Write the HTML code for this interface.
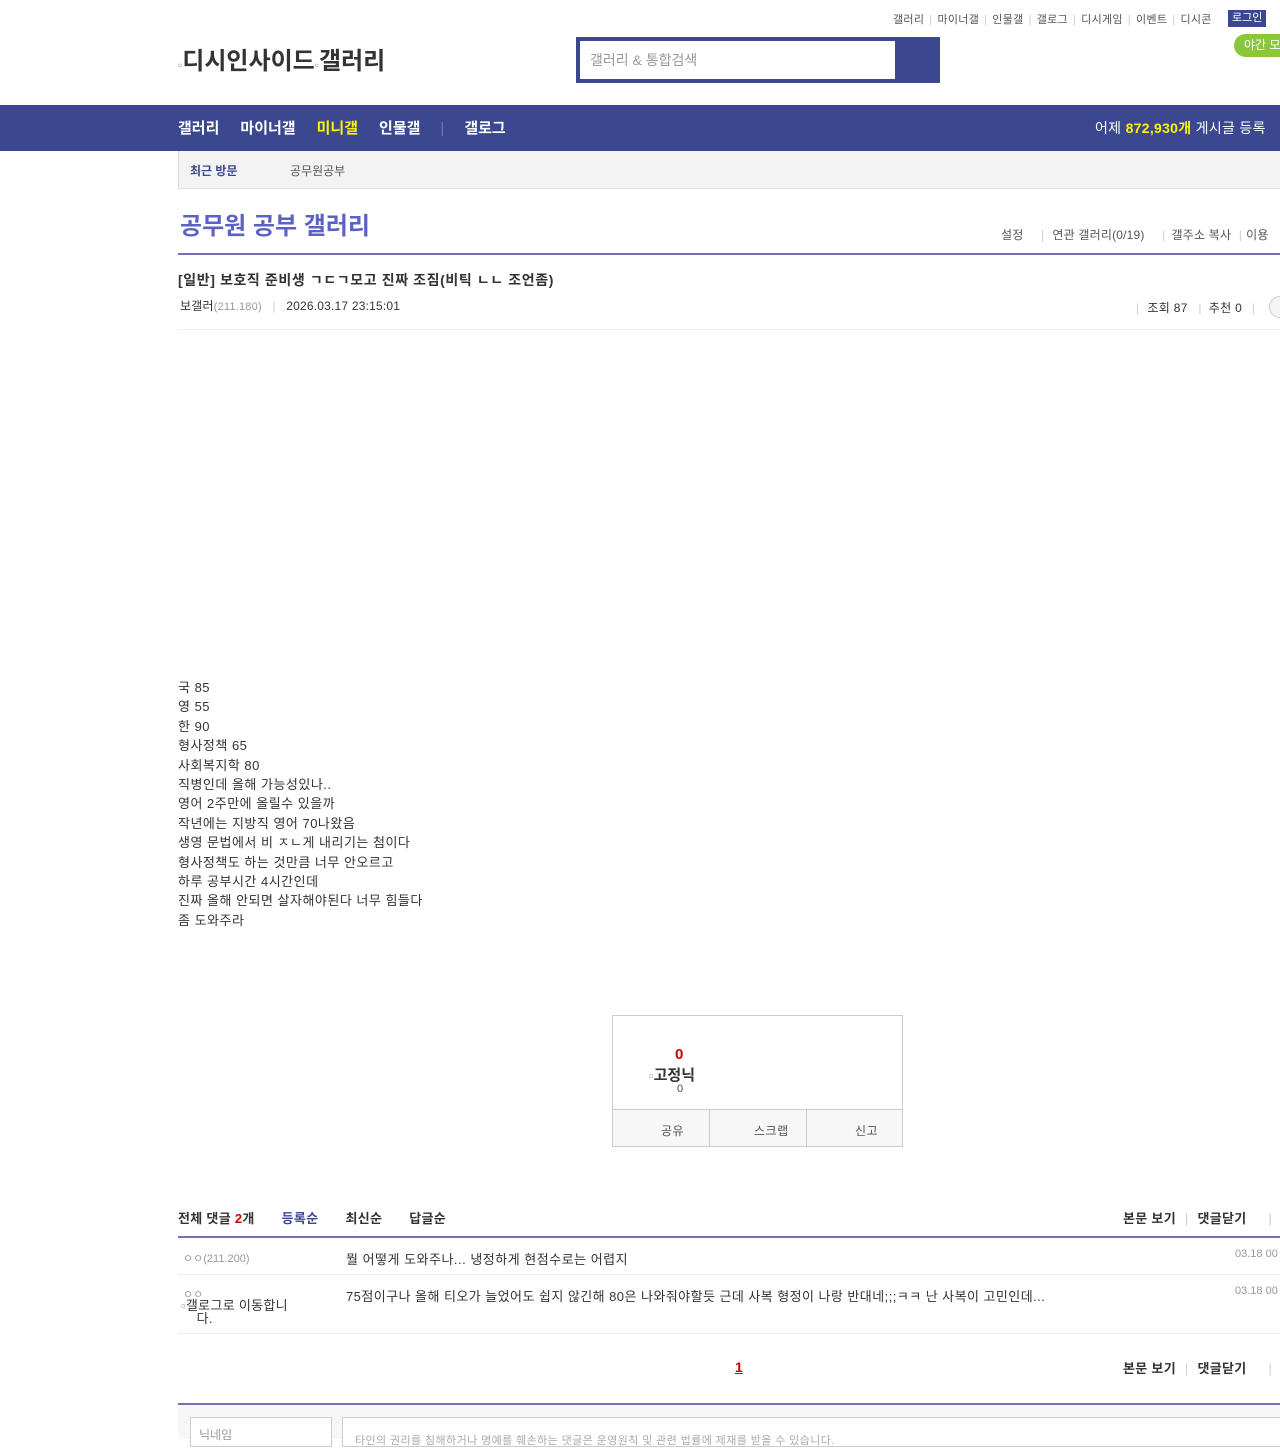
<!DOCTYPE html>
<html><head><meta charset="utf-8"><style>
*{margin:0;padding:0;box-sizing:border-box}
body{width:1280px;height:1439px;overflow:hidden;background:#fff;font-family:"Liberation Sans","Noto Sans CJK KR",sans-serif;color:#333;position:relative}
.a{position:absolute;white-space:nowrap}
.gnb{font-size:11px;color:#555;letter-spacing:0.3px}
.gnb span.s{color:#ccc;margin:0 5px}
</style></head><body>
<div class="a gnb" style="left:893px;top:11px">갤러리<span class="s">|</span>마이너갤<span class="s">|</span>인물갤<span class="s">|</span>갤로그<span class="s">|</span>디시게임<span class="s">|</span>이벤트<span class="s">|</span>디시콘</div>
<div class="a" style="left:1228px;top:10px;background:#3b4890;color:#fff;font-size:11px;padding:1px 4px;height:17px;line-height:15px">로그인</div>
<div class="a" style="left:1234px;top:34px;background:#8ac73c;color:#fff;font-size:12px;padding:0 10px;height:23px;line-height:23px;border-radius:12px 0 0 12px;width:60px">야간 모</div>
<div class="a" style="left:178px;top:41px;font-size:24px;font-weight:bold;color:#333"><span style="font-size:12px;color:#999">▫</span>디시인사이드<span style="font-size:12px;color:#999">▫</span>갤러리</div>
<div class="a" style="left:576px;top:37px;width:364px;height:46px;background:#3b4890"></div>
<div class="a" style="left:580px;top:41px;width:315px;height:38px;background:#fff;font-size:14px;color:#999;line-height:38px;padding-left:10px">갤러리 &amp; 통합검색</div>
<div class="a" style="left:0;top:105px;width:1280px;height:46px;background:#3b4890"></div>
<div class="a" style="left:178px;top:106px;height:46px;line-height:46px;font-size:15px;font-weight:bold;color:#fff;word-spacing:0">갤러리<span style="margin-left:21px">마이너갤</span><span style="margin-left:21px;color:#fff200">미니갤</span><span style="margin-left:21px">인물갤</span><span style="margin-left:20px;color:#6a75b0;font-weight:normal">|</span><span style="margin-left:20px">갤로그</span></div>
<div class="a" style="left:1095px;top:105px;height:46px;line-height:46px;font-size:14px;color:#fff;letter-spacing:0.3px">어제 <b style="color:#fff200">872,930개</b> 게시글 등록</div>
<div class="a" style="left:178px;top:151px;width:1102px;height:38px;background:#f3f3f3;border:1px solid #ddd;border-top:0;border-right:0"></div>
<div class="a" style="left:190px;top:162px;font-size:12px;font-weight:bold;color:#3b4890">최근 방문</div>
<div class="a" style="left:290px;top:162px;font-size:12px;color:#555">공무원공부</div>
<div class="a" style="left:180px;top:206px;font-size:24px;font-weight:bold;color:#5c62c4">공무원 공부 갤러리</div>
<div class="a" style="left:1001px;top:226px;font-size:12px;color:#555;letter-spacing:0.2px">설정 <span style="color:#ccc;margin:0 8px 0 14px">|</span>연관 갤러리(0/19) <span style="color:#ccc;margin:0 6px 0 14px">|</span>갤주소 복사 <span style="color:#ccc;margin:0 4px">|</span>이용</div>
<div class="a" style="left:178px;top:253px;width:1102px;height:2px;background:#7370b8"></div>
<div class="a" style="left:178px;top:270px;font-size:14px;font-weight:bold;color:#333;letter-spacing:0.6px">[일반] 보호직 준비생 ㄱㄷㄱ모고 진짜 조짐(비틱 ㄴㄴ 조언좀)</div>
<div class="a" style="left:180px;top:297px;font-size:12px;color:#333;letter-spacing:0.2px">보갤러<span style="color:#999;font-size:11px">(211.180)</span> <span style="color:#ccc;margin:0 7px">|</span> 2026.03.17 23:15:01</div>
<div class="a" style="left:1136px;top:299px;font-size:12px;color:#333;letter-spacing:0.3px"><span style="color:#ccc;margin-right:8px">|</span>조회 87 <span style="color:#ccc;margin:0 7px">|</span>추천 0 <span style="color:#ccc;margin:0 6px">|</span></div>
<div class="a" style="left:1269px;top:296px;width:24px;height:22px;border:1px solid #ccc;border-radius:11px;background:#f5f5f5"></div>
<div class="a" style="left:178px;top:329px;width:1102px;height:1px;background:#eee"></div>
<div class="a" style="left:178px;top:678px;font-size:13px;color:#333;line-height:19.4px;white-space:normal;letter-spacing:0.5px">국 85<br>영 55<br>한 90<br>형사정책 65<br>사회복지학 80<br>직병인데 올해 가능성있나..<br>영어 2주만에 올릴수 있을까<br>작년에는 지방직 영어 70나왔음<br>생영 문법에서 비 ㅈㄴ게 내리기는 첨이다<br>형사정책도 하는 것만큼 너무 안오르고<br>하루 공부시간 4시간인데<br>진짜 올해 안되면 살자해야된다 너무 힘들다<br>좀 도와주라</div>
<div class="a" style="left:612px;top:1015px;width:291px;height:132px;border:1px solid #ccc"></div>
<div class="a" style="left:675px;top:1046px;font-size:15px;font-weight:bold;color:#c00">0</div>
<div class="a" style="left:649px;top:1064px;font-size:15px;font-weight:bold;color:#333"><span style="font-size:13px;color:#999">▫</span>고정닉</div>
<div class="a" style="left:677px;top:1083px;font-size:11px;color:#3b4890">0</div>
<div class="a" style="left:613px;top:1109px;width:289px;height:37px;background:#f7f7f7;border-top:1px solid #ccc"></div>
<div class="a" style="left:709px;top:1110px;width:1px;height:36px;background:#ccc"></div>
<div class="a" style="left:806px;top:1110px;width:1px;height:36px;background:#ccc"></div>
<div class="a" style="left:661px;top:1122px;font-size:12px;color:#555;letter-spacing:0.5px">공유</div>
<div class="a" style="left:754px;top:1122px;font-size:12px;color:#555;letter-spacing:0.5px">스크랩</div>
<div class="a" style="left:855px;top:1122px;font-size:12px;color:#555;letter-spacing:0.5px">신고</div>
<div class="a" style="left:178px;top:1208px;font-size:13px;font-weight:bold;color:#333;letter-spacing:0.3px">전체 댓글 <span style="color:#c00">2</span>개<span style="color:#3b4890;margin-left:27px">등록순</span><span style="margin-left:27px">최신순</span><span style="margin-left:27px">답글순</span></div>
<div class="a" style="left:1123px;top:1208px;font-size:13px;font-weight:bold;color:#333;letter-spacing:0.3px">본문 보기 <span style="color:#ccc;font-weight:normal;margin:0 5px">|</span> 댓글닫기 <span style="color:#ccc;font-weight:normal;margin-left:18px">|</span></div>
<div class="a" style="left:178px;top:1236px;width:1102px;height:2px;background:#7370b8"></div>
<div class="a" style="left:183px;top:1250px;font-size:11px;color:#999">ㅇㅇ(211.200)</div>
<div class="a" style="left:346px;top:1249px;font-size:13px;color:#333;letter-spacing:0.5px">뭘 어떻게 도와주나... 냉정하게 현점수로는 어렵지</div>
<div class="a" style="left:1235px;top:1248px;font-size:11px;color:#999">03.18 00</div>
<div class="a" style="left:178px;top:1274px;width:1102px;height:1px;background:#eee"></div>
<div class="a" style="left:183px;top:1286px;font-size:11px;color:#999">ㅇㅇ</div>
<div class="a" style="left:181px;top:1299px;font-size:13px;color:#333;line-height:13px;letter-spacing:0.3px"><span style="color:#999">▫</span>갤로그로 이동합니<br>&nbsp;&nbsp;&nbsp;&nbsp;다.</div>
<div class="a" style="left:346px;top:1286px;font-size:13px;color:#333;letter-spacing:0.45px">75점이구나 올해 티오가 늘었어도 쉽지 않긴해 80은 나와줘야할듯 근데 사복 형정이 나랑 반대네;;;ㅋㅋ 난 사복이 고민인데...</div>
<div class="a" style="left:1235px;top:1285px;font-size:11px;color:#999">03.18 00</div>
<div class="a" style="left:178px;top:1333px;width:1102px;height:1px;background:#eee"></div>
<div class="a" style="left:735px;top:1359px;font-size:14px;font-weight:bold;color:#c00;text-decoration:underline">1</div>
<div class="a" style="left:1123px;top:1358px;font-size:13px;font-weight:bold;color:#333;letter-spacing:0.3px">본문 보기 <span style="color:#ccc;font-weight:normal;margin:0 5px">|</span> 댓글닫기 <span style="color:#ccc;font-weight:normal;margin-left:18px">|</span></div>
<div class="a" style="left:178px;top:1403px;width:1102px;height:2px;background:#7370b8"></div>
<div class="a" style="left:178px;top:1405px;width:1102px;height:34px;background:#f7f7f7"></div>
<div class="a" style="left:190px;top:1417px;width:142px;height:30px;border:1px solid #ccc;background:#fff;font-size:12px;color:#999;padding:8px 8px">닉네임</div>
<div class="a" style="left:342px;top:1417px;width:950px;height:30px;border:1px solid #ccc;background:#fff;font-size:11px;color:#aaa;padding:14px 12px;letter-spacing:0.4px">타인의 권리를 침해하거나 명예를 훼손하는 댓글은 운영원칙 및 관련 법률에 제재를 받을 수 있습니다.</div>
</body></html>
